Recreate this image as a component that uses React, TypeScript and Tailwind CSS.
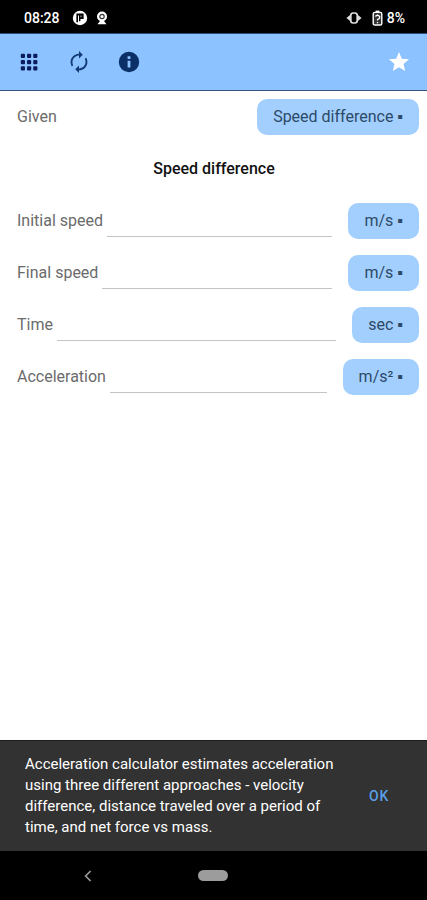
import { useState } from "react"

interface Field {
    id: string
    label: string
    units: string[]
}

const fields: Field[] = [
    { id: "initial-speed", label: "Initial speed", units: ["m/s", "km/h", "mph"] },
    { id: "final-speed", label: "Final speed", units: ["m/s", "km/h", "mph"] },
    { id: "time", label: "Time", units: ["sec", "min", "hr"] },
    { id: "acceleration", label: "Acceleration", units: ["m/s²", "ft/s²"] },
]

const modes = ["Speed difference", "Distance traveled", "Net force"]

function PillSelect({
    id,
    label,
    options,
    value,
    onChange,
}: {
    id: string
    label?: string
    options: string[]
    value?: string
    onChange?: (value: string) => void
}) {
    return (
        <select
            id={id}
            aria-label={label}
            value={value}
            onChange={(e) => onChange?.(e.target.value)}
            className="h-9 shrink-0 appearance-none field-sizing-content rounded-[10px] bg-[#a3cfff] px-4 text-base text-[#2c4a68] outline-none"
        >
            {options.map((option) => (
                <option key={option} value={option}>
                    {option} ▪
                </option>
            ))}
        </select>
    )
}

function StatusBar() {
    return (
        <div className="flex h-[33px] shrink-0 items-center bg-black pt-0.5 pr-[22px] pl-6 text-sm font-medium text-white">
            <span>08:28</span>
            <svg viewBox="0 0 16 16" className="ml-3 size-4">
                <circle cx="8" cy="8" r="7.2" fill="#fff" />
                <path d="M4.4 3.6h7.2v5.4H8.4v2.2H7V5.4H6v6.8H4.4z" fill="#000" />
                <path d="M8.2 5.4h1.6v1.8H8.2z" fill="#777" />
            </svg>
            <svg viewBox="0 0 12 14" className="ml-2 h-3.5 w-3">
                <circle cx="6" cy="5.5" r="5" fill="#fff" />
                <circle cx="6" cy="5.5" r="2.2" fill="#fff" stroke="#333" strokeWidth="1.2" />
                <path d="M1.5 13.2 4 10h4l2.5 3.2z" fill="#fff" />
            </svg>
            <svg viewBox="0 0 16 12" className="ml-auto h-3 w-4">
                <path d="M5 2.2 0.4 6 5 9.8zM11 2.2 15.6 6 11 9.8z" fill="#ddd" />
                <rect x="4.8" y="1" width="6.4" height="10" rx="2.4" fill="#000" stroke="#ddd" strokeWidth="1.7" />
            </svg>
            <svg viewBox="0 0 11 16" className="mr-1 ml-2.5 h-4 w-[11px]">
                <path d="M3.6 0.6h3.8v2H3.6z" fill="#fff" />
                <rect x="1.2" y="2.4" width="8.6" height="12.6" rx="1.6" fill="#333" stroke="#fff" strokeWidth="1.4" />
                <path d="M3.4 6.4 5.5 5l2.1 1.4v1.8L5.5 9.6v1M5.5 12v1.2" fill="none" stroke="#fff" strokeWidth="1.3" />
            </svg>
            <span>8%</span>
        </div>
    )
}

function Toolbar() {
    const [starred, setStarred] = useState(true)

    return (
        <header className="flex h-[58px] shrink-0 items-center border-y border-t-[#2c4c7c] border-b-[#3a5480] bg-[#8cc2ff] px-4">
            <button aria-label="Menu" className="p-px">
                <svg viewBox="0 0 24 24" className="size-6" fill="#0a1c5c">
                    {[3.8, 10, 16.2].map((y) =>
                        [3.8, 10, 16.2].map((x) => <rect key={`${x}-${y}`} x={x} y={y} width="4.2" height="4.2" rx="1" />)
                    )}
                </svg>
            </button>
            <button aria-label="Reset" className="ml-6 p-px">
                <svg viewBox="0 0 24 24" className="size-6" fill="#123a74">
                    <path d="M12 5.6v2.8l3.8-3.7L12 1v2.8c-4.6 0-8.4 3.7-8.4 8.3 0 1.6.5 3.1 1.3 4.4l1.3-1.3a6.5 6.5 0 0 1 5.8-9.6zm7.1 2-1.3 1.3A6.5 6.5 0 0 1 12 18.4v-2.8l-3.8 3.7L12 23v-2.8c4.6 0 8.4-3.7 8.4-8.3 0-1.6-.5-3.1-1.3-4.3z" />
                </svg>
            </button>
            <button aria-label="Info" className="ml-6 p-px">
                <svg viewBox="0 0 24 24" className="size-6" fill="#0b3068">
                    <path d="M12 1.8a10.2 10.2 0 1 0 0 20.4 10.2 10.2 0 0 0 0-20.4zm1.4 15.6h-2.8V10.8h2.8zm0-8.4h-2.8V6.3h2.8z" />
                </svg>
            </button>
            <button
                aria-label="Favorite"
                aria-pressed={starred}
                onClick={() => setStarred(!starred)}
                className="ml-auto"
            >
                <svg viewBox="0 0 24 24" className="size-6" fill={starred ? "#fff" : "none"} stroke={starred ? "none" : "#fff"}>
                    <path d="M12 17.27 18.18 21l-1.64-7.03L22 9.24l-7.19-.61L12 2 9.19 8.63 2 9.24l5.46 4.73L5.82 21z" />
                </svg>
            </button>
        </header>
    )
}

export default function App() {
    const [mode, setMode] = useState(modes[0])
    const [showHint, setShowHint] = useState(true)

    return (
        <div className="flex min-h-screen flex-col bg-white font-[Roboto,sans-serif]">
            <StatusBar />
            <Toolbar />

            <main className="flex flex-1 flex-col gap-4 pt-2 pr-2 pb-4 pl-[17px] text-base text-[#6b6b6b]">
                <div className="flex items-center justify-between">
                    <label htmlFor="mode">Given</label>
                    <PillSelect id="mode" options={modes} value={mode} onChange={setMode} />
                </div>

                <h1 className="pr-2 text-center leading-9 font-medium text-[#111]">{mode}</h1>

                {fields.map((field) => (
                    <div key={field.id} className="flex items-center">
                        <label htmlFor={field.id}>{field.label}</label>
                        <input
                            id={field.id}
                            type="text"
                            inputMode="decimal"
                            className="mr-4 ml-1 h-8 min-w-0 flex-1 border-b border-[#c4c4c4] outline-none"
                        />
                        <PillSelect id={`${field.id}-unit`} label={`${field.label} unit`} options={field.units} />
                    </div>
                ))}
            </main>

            {showHint && (
                <div className="flex shrink-0 items-center justify-between border-t border-[#1c1c1c] bg-[#323232] py-[13px] pr-[30px] pl-[25px]">
                    <p className="max-w-[320px] text-[15px] leading-[21px] text-white">
                        Acceleration calculator estimates acceleration using three different approaches - velocity
                        difference, distance traveled over a period of time, and net force vs mass.
                    </p>
                    <button
                        onClick={() => setShowHint(false)}
                        className="px-2 py-2 text-sm font-medium tracking-wider text-[#5a9fe6]"
                    >
                        OK
                    </button>
                </div>
            )}

            {/* System navigation */}
            <nav className="grid h-[49px] shrink-0 grid-cols-5 items-center justify-items-center bg-black">
                <button aria-label="Back" className="col-start-2 -ml-20">
                    <svg viewBox="0 0 8 12" className="h-3 w-2">
                        <path d="M6.6 1 1.6 6l5 5" fill="none" stroke="#999" strokeWidth="1.7" />
                    </svg>
                </button>
                <button aria-label="Home" className="h-[11px] w-[30px] rounded-full bg-[#9c9c9c]" />
            </nav>
        </div>
    )
}
